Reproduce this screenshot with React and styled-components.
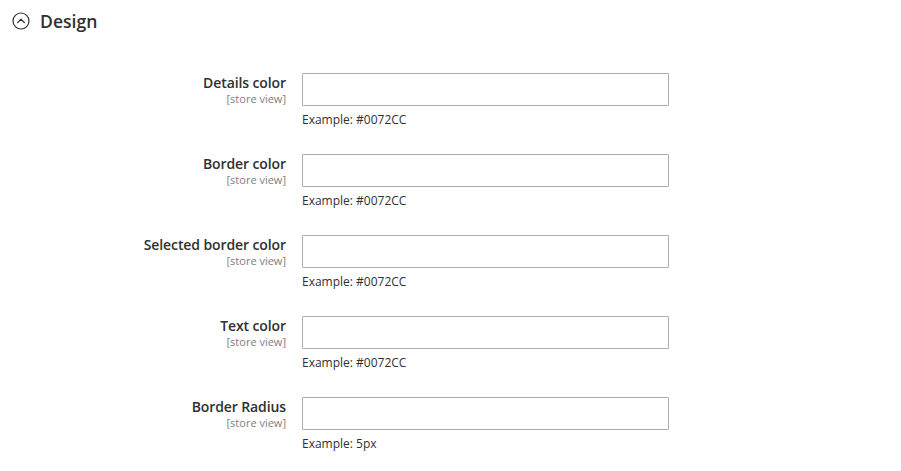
import React from "react";
import styled, { createGlobalStyle } from "styled-components";

const Global = createGlobalStyle`
  html, body { margin: 0; padding: 0; background: #fff; }
  body { font-family: "Open Sans", "Noto Sans", sans-serif; color: #303030; }
`;

const Page = styled.div`
  width: 901px;
  height: 471px;
  overflow: hidden;
  box-sizing: border-box;
  padding: 8px 0 0 12px;
`;

const Header = styled.div`
  display: flex;
  align-items: center;
  gap: 10px;
  height: 26px;
  font-size: 17.6px;
  font-weight: 600;
  color: #303030;
  margin-bottom: 39px;
`;

const Icon = styled.svg`
  width: 18px;
  height: 18px;
  flex: none;
`;

const Form = styled.div`
  display: flex;
  flex-direction: column;
  gap: 26px;
`;

const Row = styled.div`
  display: grid;
  grid-template-columns: 274px 367px;
  column-gap: 16px;
`;

const LabelCol = styled.div`
  text-align: right;
`;

const LabelText = styled.div`
  font-size: 14px;
  font-weight: 600;
  line-height: 19px;
  letter-spacing: -0.1px;
  color: #303030;
`;

const Scope = styled.div`
  font-size: 11px;
  line-height: 13px;
  color: #808080;
`;

const Field = styled.div`
  display: flex;
  flex-direction: column;
`;

const Input = styled.input`
  box-sizing: border-box;
  width: 367px;
  height: 33px;
  border: 1px solid #adadad;
  border-radius: 1px;
  background: #fff;
  margin: 0;
  padding: 0 10px;
  font-family: inherit;
  font-size: 14px;
`;

const Note = styled.div`
  margin-top: 5px;
  font-size: 12px;
  line-height: 17px;
  color: #303030;
`;

const rows = [
  ["Details color", "Example: #0072CC"],
  ["Border color", "Example: #0072CC"],
  ["Selected border color", "Example: #0072CC"],
  ["Text color", "Example: #0072CC"],
  ["Border Radius", "Example: 5px"],
];

export default function App() {
  return (
    <Page>
      <Global />
      <Header>
        <Icon viewBox="0 0 18 18">
          <circle cx="9" cy="9" r="8" fill="none" stroke="#303030" strokeWidth="1.2" />
          <path d="M5.6 10.6 L9 7.2 L12.4 10.6" fill="none" stroke="#303030" strokeWidth="1.3" strokeLinecap="round" strokeLinejoin="round" />
        </Icon>
        Design
      </Header>
      <Form>
        {rows.map(([label, note]) => (
          <Row key={label}>
            <LabelCol>
              <LabelText>{label}</LabelText>
              <Scope>[store view]</Scope>
            </LabelCol>
            <Field>
              <Input type="text" />
              <Note>{note}</Note>
            </Field>
          </Row>
        ))}
      </Form>
    </Page>
  );
}
